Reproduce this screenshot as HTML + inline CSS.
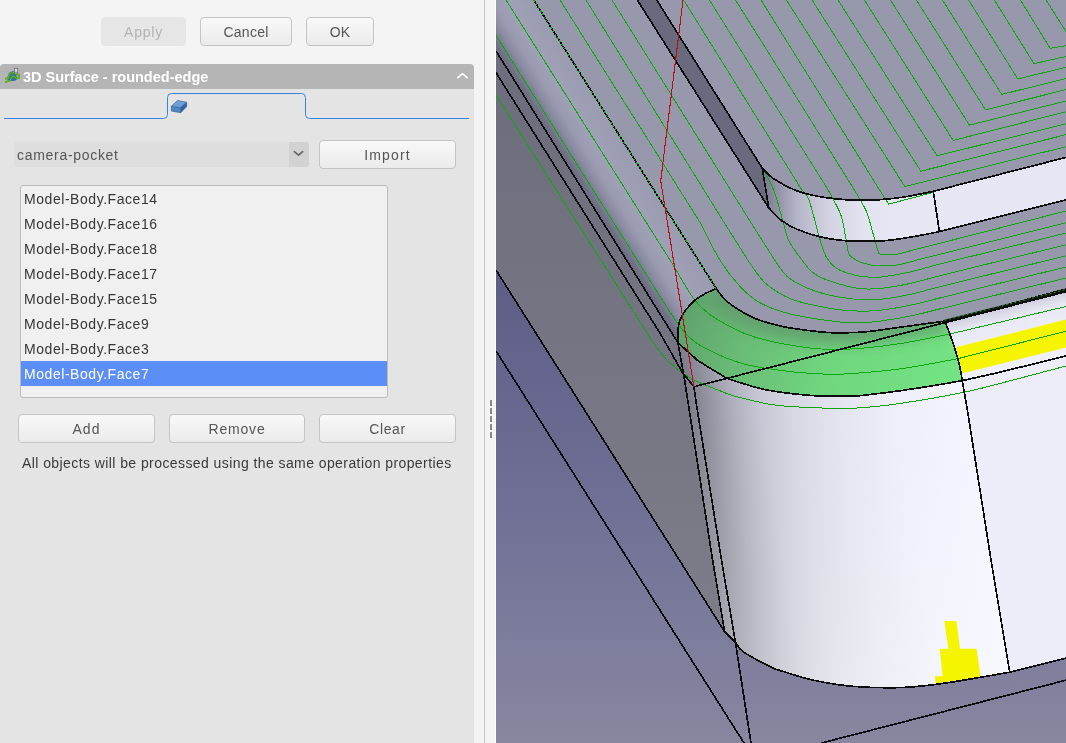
<!DOCTYPE html>
<html><head><meta charset="utf-8">
<style>
html,body{margin:0;padding:0;}
body{width:1066px;height:743px;overflow:hidden;background:#f4f4f4;font-family:"Liberation Sans",sans-serif;position:relative;color:#3d3d3d;font-size:14px;letter-spacing:0.45px;}
.abs{position:absolute;box-sizing:border-box;}
.btn,.item,#title,#combo,#note{will-change:transform;}
.btn{position:absolute;box-sizing:border-box;border:1px solid #c4c4c4;border-radius:4px;background:linear-gradient(#f8f8f8,#ebebeb);color:#555;letter-spacing:0.25px;text-align:center;height:29px;line-height:29px;white-space:nowrap;}
.item{letter-spacing:0.55px;position:absolute;left:1px;right:1px;height:25px;line-height:27px;color:#363636;padding-left:2px;box-sizing:border-box;white-space:nowrap;}
</style></head><body>
<!-- top buttons -->
<div class="btn" style="left:101px;top:17px;width:85px;background:#e6e6e6;border-color:#e6e6e6;color:#b4b4b4;letter-spacing:0.75px;">Apply</div>
<div class="btn" style="left:200px;top:17px;width:92px;">Cancel</div>
<div class="btn" style="left:306px;top:17px;width:68px;">OK</div>
<!-- panel body -->
<div class="abs" style="left:0;top:64px;width:474px;height:679px;background:#e4e4e4;border-radius:4px 4px 0 0;"></div>
<div class="abs" style="left:0;top:64px;width:474px;height:25px;background:#b5b5b5;border-radius:4px 4px 0 0;"></div>
<div class="abs" id="title" style="left:23px;top:64px;height:25px;line-height:27px;font-size:14.5px;letter-spacing:0;font-weight:bold;color:#fff;white-space:nowrap;">3D Surface - rounded-edge</div>
<!-- header icon -->
<svg class="abs" style="left:2px;top:64px;" width="24" height="24" viewBox="2 64 24 24">
<path d="M7.2 79.5 Q7.6 72.6 12.3 71.2 Q15.3 70.8 16.3 73.5 L17 79.5 L14.5 81 L9.5 81 Z" fill="#3a6dbe"/>
<rect x="14.4" y="68.3" width="3.3" height="6.3" fill="#dcdcdc" stroke="#666" stroke-width="0.7"/>
<path d="M14.6 72.3 H17.5 M14.6 73.6 H17.5" stroke="#555" stroke-width="0.6"/>
<path d="M5.9 78.6 L8.1 78.2 L9.4 74.7 L11.7 72.8 L14 72.7" fill="none" stroke="#3d8f12" stroke-width="1.8" stroke-linejoin="round" stroke-linecap="round"/>
<path d="M5.9 78.6 L8.1 78.2 L9.4 74.7 L11.7 72.8 L14 72.7" fill="none" stroke="#66d01e" stroke-width="0.9" stroke-linejoin="round" stroke-linecap="round"/>
<path d="M5.9 81.8 L10.1 80.5 L11.4 77.2 L13.3 76.3 L14.9 76.9 L16.5 78.5 L19.2 77.6 L18.8 74.9 L17.4 74.5" fill="none" stroke="#3d8f12" stroke-width="1.8" stroke-linejoin="round" stroke-linecap="round"/>
<path d="M5.9 81.8 L10.1 80.5 L11.4 77.2 L13.3 76.3 L14.9 76.9 L16.5 78.5 L19.2 77.6 L18.8 74.9 L17.4 74.5" fill="none" stroke="#66d01e" stroke-width="0.9" stroke-linejoin="round" stroke-linecap="round"/>
</svg>
<!-- collapse chevron -->
<svg class="abs" style="left:452px;top:66px;" width="20" height="20" viewBox="452 66 20 20"><path d="M457.9 77.6 L462.5 73.6 L467.1 77.6" fill="none" stroke="#fff" stroke-width="1.7" stroke-linecap="round" stroke-linejoin="round"/></svg>
<!-- tab line -->
<svg class="abs" style="left:0;top:89px;" width="474" height="34" viewBox="0 89 474 34">
<path d="M4 118.5 H163.5 Q167.5 118.5 167.5 114.5 V97.5 Q167.5 93.5 171.5 93.5 H301.5 Q305.5 93.5 305.5 97.5 V114.5 Q305.5 118.5 309.5 118.5 H469" fill="none" stroke="#3584e4" stroke-width="1"/>
<!-- tab icon -->
<path d="M171.3 106.3 L177.5 100.5 L186.7 102.2 L180.5 107.6 Z" fill="#6a9fd8"/>
<path d="M171.3 106.3 L180.5 107.6 L180.7 112.7 L171.5 111.1 Z" fill="#4f88c8"/>
<path d="M180.5 107.6 L186.7 102.2 L186.7 106.6 L180.7 112.7 Z" fill="#2f63a8"/>
<path d="M171.3 106.3 L177.5 100.5 L186.7 102.2 L186.7 106.6 L180.7 112.7 L171.5 111.1 Z M171.3 106.3 L180.5 107.6 L186.7 102.2 M180.5 107.6 L180.7 112.7" fill="none" stroke="#2d5488" stroke-width="0.6" stroke-linejoin="round"/>
</svg>
<!-- combo -->
<div class="abs" style="left:14px;top:142px;width:295px;height:25px;background:#dedede;border-radius:3px;"></div>
<div class="abs" style="left:289px;top:142px;width:20px;height:25px;background:#d2d2d2;border-radius:0 3px 3px 0;"></div>
<svg class="abs" style="left:289px;top:142px;" width="20" height="25" viewBox="289 142 20 25"><path d="M294.3 151.7 L298.5 155.2 L302.7 151.7" fill="none" stroke="#666" stroke-width="1.7" stroke-linecap="round" stroke-linejoin="round"/></svg>
<div class="abs" id="combo" style="left:17px;top:142px;height:25px;line-height:27px;color:#555;letter-spacing:0.7px;">camera-pocket</div>
<div class="btn" style="left:319px;top:140px;width:137px;letter-spacing:1.1px;">Import</div>
<!-- list -->
<div class="abs" style="left:20px;top:185px;width:368px;height:213px;background:#f0f0f0;border:1px solid #bbb;border-radius:3px;">
<div class="item" style="top:0px;">Model-Body.Face14</div>
<div class="item" style="top:25px;">Model-Body.Face16</div>
<div class="item" style="top:50px;">Model-Body.Face18</div>
<div class="item" style="top:75px;">Model-Body.Face17</div>
<div class="item" style="top:100px;">Model-Body.Face15</div>
<div class="item" style="top:125px;">Model-Body.Face9</div>
<div class="item" style="top:150px;">Model-Body.Face3</div>
<div class="item" style="top:175px;left:0;right:0;padding-left:3px;background:#5b8ef7;color:#fff;">Model-Body.Face7</div>
</div>
<div class="btn" style="left:18px;top:414px;width:137px;letter-spacing:1px;">Add</div>
<div class="btn" style="left:169px;top:414px;width:136px;letter-spacing:0.8px;">Remove</div>
<div class="btn" style="left:319px;top:414px;width:137px;letter-spacing:0.6px;">Clear</div>
<div class="abs" id="note" style="letter-spacing:0.42px;left:21.5px;top:451px;height:25px;line-height:25px;color:#3a3a3a;white-space:nowrap;">All objects will be processed using the same operation properties</div>
<!-- splitter -->
<div class="abs" style="left:495px;top:0;width:1px;height:743px;background:#fcfcfc;"></div>
<div class="abs" style="left:484px;top:0;width:1px;height:743px;background:#c6c6c6;"></div>
<div class="abs" style="left:490px;top:400px;width:2px;height:38px;background:repeating-linear-gradient(#888 0,#888 6px,transparent 6px,transparent 8px);"></div>
<!-- viewport -->
<svg class="abs" id="vp" style="left:496px;top:0;" width="570" height="743" viewBox="496 0 570 743">
<defs>
<linearGradient id="bg" x1="0" y1="0" x2="0" y2="743" gradientUnits="userSpaceOnUse">
<stop offset="0" stop-color="#47477a"/><stop offset="0.36" stop-color="#5c5c86"/><stop offset="0.73" stop-color="#737398"/><stop offset="1" stop-color="#8787a1"/>
</linearGradient>
<linearGradient id="fil" x1="496" y1="51" x2="555.4" y2="14" gradientUnits="userSpaceOnUse">
<stop offset="0" stop-color="#6c6c80"/><stop offset="0.06" stop-color="#707086"/><stop offset="0.2" stop-color="#8a8aa0"/><stop offset="0.33" stop-color="#9a9ab0"/><stop offset="0.5" stop-color="#a0a0b6"/><stop offset="0.75" stop-color="#9c9cb2"/><stop offset="1" stop-color="#9898ae"/>
</linearGradient>
<linearGradient id="wall" x1="690" y1="400" x2="966.4" y2="355" gradientUnits="userSpaceOnUse">
<stop offset="0" stop-color="#7e7e8c"/><stop offset="0.05" stop-color="#8e8e9c"/><stop offset="0.14" stop-color="#acacba"/><stop offset="0.24" stop-color="#c6c6d4"/><stop offset="0.35" stop-color="#d6d6e2"/><stop offset="0.52" stop-color="#e4e4f0"/><stop offset="0.71" stop-color="#eeeefa"/><stop offset="0.9" stop-color="#f2f2fd"/><stop offset="1" stop-color="#f4f4ff"/>
</linearGradient>
<linearGradient id="boss" x1="762" y1="0" x2="900" y2="0" gradientUnits="userSpaceOnUse">
<stop offset="0" stop-color="#747488"/><stop offset="0.08" stop-color="#8a8a9e"/><stop offset="0.25" stop-color="#b4b4c8"/><stop offset="0.48" stop-color="#d2d2e2"/><stop offset="0.72" stop-color="#e2e2f0"/><stop offset="1" stop-color="#e6e6f4"/>
</linearGradient>
<linearGradient id="grn" x1="680" y1="300" x2="960" y2="390" gradientUnits="userSpaceOnUse">
<stop offset="0" stop-color="#5f9f6c"/><stop offset="0.25" stop-color="#69bc76"/><stop offset="0.55" stop-color="#70d67e"/><stop offset="1" stop-color="#73e483"/>
</linearGradient>
<linearGradient id="rfil" x1="1000" y1="306" x2="1010" y2="345" gradientUnits="userSpaceOnUse">
<stop offset="0" stop-color="#c8c8d8"/><stop offset="0.35" stop-color="#e8e8f4"/><stop offset="1" stop-color="#f0f0fb"/>
</linearGradient>
<linearGradient id="wov" x1="0" y1="400" x2="0" y2="690" gradientUnits="userSpaceOnUse">
<stop offset="0" stop-color="#fff" stop-opacity="0"/><stop offset="1" stop-color="#fff" stop-opacity="0.4"/>
</linearGradient>
<linearGradient id="dw" x1="0" y1="80" x2="0" y2="630" gradientUnits="userSpaceOnUse">
<stop offset="0" stop-color="#6d6d7d"/><stop offset="1" stop-color="#7d7d89"/>
</linearGradient>
<filter id="bl" x="-20%" y="-50%" width="140%" height="200%"><feGaussianBlur stdDeviation="7"/></filter>
</defs>
<rect x="496" y="0" width="570" height="743" fill="url(#bg)"/>
<path d="M496.0 51.0 L677.9 342.6 L683.6 373.7 L712.6 560.0 L724.7 631.8 L496.0 270.0 Z" fill="url(#dw)"/>
<path d="M496 0 H1066 V289 L990.0 309.4 L944.7 321.1  C936.8 322.2 910.3 325.9 897.5 327.6 C884.7 329.4 876.5 330.7 867.7 331.6 C859.0 332.5 851.7 332.7 845.0 332.8 C838.3 332.9 833.3 332.9 827.5 332.5 C821.7 332.1 817.5 331.7 810.0 330.7 C802.5 329.7 791.8 328.6 782.5 326.5 C773.2 324.4 762.5 321.6 754.2 318.1 C745.9 314.7 737.9 309.4 732.6 305.8 C727.3 302.2 724.9 299.3 722.2 296.4 C719.5 293.5 717.2 289.8 716.2 288.5  L533.7 0 Z" fill="#9898ad"/>
<path d="M496 0 L533.7 0.0 L716.2 288.5  C714.4 289.4 708.8 291.7 705.2 293.6 C701.7 295.6 698.2 297.4 694.9 300.2 C691.6 303.0 687.9 307.1 685.4 310.5 C682.9 313.9 681.0 317.6 679.8 320.9 C678.5 324.2 678.2 326.7 677.9 330.3 C677.6 333.9 677.9 340.6 677.9 342.6  L496 51 Z" fill="url(#fil)"/>
<path d="M677.9 342.6 L683.6 373.7 L712.6 560.0 L724.7 631.8  C726.5 633.6 732.4 639.2 735.5 642.6 C738.6 646.0 737.8 648.0 743.6 652.0 C749.4 656.0 764.3 663.7 770.5 666.8 C776.7 669.9 773.9 668.6 781.0 670.8 C788.1 673.0 801.2 677.6 813.3 680.2 C825.4 682.8 838.9 685.2 853.7 686.4 C868.5 687.6 887.2 688.0 902.0 687.5 C916.8 687.0 924.5 686.0 942.5 683.5 C960.5 681.0 998.5 674.1 1009.7 672.2  L991.0 560.0 L967.4 410.0 L962.2 380.6  C961.8 378.1 960.8 370.8 959.6 365.7 C958.4 360.6 956.8 355.2 955.2 350.0 C953.6 344.8 951.6 339.0 949.9 334.2 C948.1 329.4 945.6 323.3 944.7 321.1  C936.8 322.2 910.3 325.9 897.5 327.6 C884.7 329.4 876.5 330.7 867.7 331.6 C859.0 332.5 851.7 332.7 845.0 332.8 C838.3 332.9 833.3 332.9 827.5 332.5 C821.7 332.1 817.5 331.7 810.0 330.7 C802.5 329.7 791.8 328.6 782.5 326.5 C773.2 324.4 762.5 321.6 754.2 318.1 C745.9 314.7 737.9 309.4 732.6 305.8 C727.3 302.2 724.9 299.3 722.2 296.4 C719.5 293.5 717.2 289.8 716.2 288.5  C714.4 289.4 708.8 291.7 705.2 293.6 C701.7 295.6 698.2 297.4 694.9 300.2 C691.6 303.0 687.9 307.1 685.4 310.5 C682.9 313.9 681.0 317.6 679.8 320.9 C678.5 324.2 678.2 326.7 677.9 330.3 C677.6 333.9 677.9 340.6 677.9 342.6  Z" fill="url(#wall)"/>
<path d="M677.9 342.6 L683.6 373.7 L712.6 560.0 L724.7 631.8  C726.5 633.6 732.4 639.2 735.5 642.6 C738.6 646.0 737.8 648.0 743.6 652.0 C749.4 656.0 764.3 663.7 770.5 666.8 C776.7 669.9 773.9 668.6 781.0 670.8 C788.1 673.0 801.2 677.6 813.3 680.2 C825.4 682.8 838.9 685.2 853.7 686.4 C868.5 687.6 887.2 688.0 902.0 687.5 C916.8 687.0 924.5 686.0 942.5 683.5 C960.5 681.0 998.5 674.1 1009.7 672.2  L991.0 560.0 L967.4 410.0 L962.2 380.6  C961.8 378.1 960.8 370.8 959.6 365.7 C958.4 360.6 956.8 355.2 955.2 350.0 C953.6 344.8 951.6 339.0 949.9 334.2 C948.1 329.4 945.6 323.3 944.7 321.1  C936.8 322.2 910.3 325.9 897.5 327.6 C884.7 329.4 876.5 330.7 867.7 331.6 C859.0 332.5 851.7 332.7 845.0 332.8 C838.3 332.9 833.3 332.9 827.5 332.5 C821.7 332.1 817.5 331.7 810.0 330.7 C802.5 329.7 791.8 328.6 782.5 326.5 C773.2 324.4 762.5 321.6 754.2 318.1 C745.9 314.7 737.9 309.4 732.6 305.8 C727.3 302.2 724.9 299.3 722.2 296.4 C719.5 293.5 717.2 289.8 716.2 288.5  C714.4 289.4 708.8 291.7 705.2 293.6 C701.7 295.6 698.2 297.4 694.9 300.2 C691.6 303.0 687.9 307.1 685.4 310.5 C682.9 313.9 681.0 317.6 679.8 320.9 C678.5 324.2 678.2 326.7 677.9 330.3 C677.6 333.9 677.9 340.6 677.9 342.6  Z" fill="url(#wov)"/>
<path d="M962.2 380.6 L967.4 410.0 L991.0 560.0 L1009.7 672.2  L1009.7 672.2 L1066.0 658.2  V356 L1050 360 Z" fill="#ededf9"/>
<path d="M944.7 321.1 L990.0 309.4 L1066.0 289.0  V356 L1050.0 360.0 L990.0 374.5 L962.2 380.6  C961.8 378.1 960.8 370.8 959.6 365.7 C958.4 360.6 956.8 355.2 955.2 350.0 C953.6 344.8 951.6 339.0 949.9 334.2 C948.1 329.4 945.6 323.3 944.7 321.1  Z" fill="url(#rfil)"/>
<path d="M956 347.3 L1066 319.5 V347.5 L961.8 373.6 Z" fill="#f5f500"/>
<clipPath id="gc"><path d="M716.2 288.5 C714.4 289.4 708.8 291.7 705.2 293.6 C701.7 295.6 698.2 297.4 694.9 300.2 C691.6 303.0 687.9 307.1 685.4 310.5 C682.9 313.9 681.0 317.6 679.8 320.9 C678.5 324.2 678.2 326.7 677.9 330.3 C677.6 333.9 677.9 340.6 677.9 342.6 L697.7 360.5 L726.9 378.4 C733.3 380.3 751.6 386.9 765.5 389.7 C779.4 392.5 796.2 394.3 810.0 395.4 C823.8 396.5 839.8 396.3 848.5 396.3 C857.2 396.3 854.3 396.3 862.5 395.4 C870.7 394.5 885.9 392.7 897.5 391.1 C909.1 389.5 921.6 387.6 932.4 385.8 C943.2 384.1 957.2 381.5 962.2 380.6 C961.8 378.1 960.8 370.8 959.6 365.7 C958.4 360.6 956.8 355.2 955.2 350.0 C953.6 344.8 951.6 339.0 949.9 334.2 C948.1 329.4 945.6 323.3 944.7 321.1 C936.8 322.2 910.3 325.9 897.5 327.6 C884.7 329.4 876.5 330.7 867.7 331.6 C859.0 332.5 851.7 332.7 845.0 332.8 C838.3 332.9 833.3 332.9 827.5 332.5 C821.7 332.1 817.5 331.7 810.0 330.7 C802.5 329.7 791.8 328.6 782.5 326.5 C773.2 324.4 762.5 321.6 754.2 318.1 C745.9 314.7 737.9 309.4 732.6 305.8 C727.3 302.2 724.9 299.3 722.2 296.4 C719.5 293.5 717.2 289.8 716.2 288.5 Z"/></clipPath>
<path d="M716.2 288.5 C714.4 289.4 708.8 291.7 705.2 293.6 C701.7 295.6 698.2 297.4 694.9 300.2 C691.6 303.0 687.9 307.1 685.4 310.5 C682.9 313.9 681.0 317.6 679.8 320.9 C678.5 324.2 678.2 326.7 677.9 330.3 C677.6 333.9 677.9 340.6 677.9 342.6 L697.7 360.5 L726.9 378.4 C733.3 380.3 751.6 386.9 765.5 389.7 C779.4 392.5 796.2 394.3 810.0 395.4 C823.8 396.5 839.8 396.3 848.5 396.3 C857.2 396.3 854.3 396.3 862.5 395.4 C870.7 394.5 885.9 392.7 897.5 391.1 C909.1 389.5 921.6 387.6 932.4 385.8 C943.2 384.1 957.2 381.5 962.2 380.6 C961.8 378.1 960.8 370.8 959.6 365.7 C958.4 360.6 956.8 355.2 955.2 350.0 C953.6 344.8 951.6 339.0 949.9 334.2 C948.1 329.4 945.6 323.3 944.7 321.1 C936.8 322.2 910.3 325.9 897.5 327.6 C884.7 329.4 876.5 330.7 867.7 331.6 C859.0 332.5 851.7 332.7 845.0 332.8 C838.3 332.9 833.3 332.9 827.5 332.5 C821.7 332.1 817.5 331.7 810.0 330.7 C802.5 329.7 791.8 328.6 782.5 326.5 C773.2 324.4 762.5 321.6 754.2 318.1 C745.9 314.7 737.9 309.4 732.6 305.8 C727.3 302.2 724.9 299.3 722.2 296.4 C719.5 293.5 717.2 289.8 716.2 288.5 Z" fill="url(#grn)"/>
<g clip-path="url(#gc)"><path d="M716.2 288.5 C717.2 289.8 719.5 293.5 722.2 296.4 C724.9 299.3 727.3 302.2 732.6 305.8 C737.9 309.4 745.9 314.7 754.2 318.1 C762.5 321.6 773.2 324.4 782.5 326.5 C791.8 328.6 802.5 329.7 810.0 330.7 C817.5 331.7 821.7 332.1 827.5 332.5 C833.3 332.9 838.3 332.9 845.0 332.8 C851.7 332.7 859.0 332.5 867.7 331.6 C876.5 330.7 884.7 329.4 897.5 327.6 C910.3 325.9 936.8 322.2 944.7 321.1 " fill="none" stroke="#629a6e" stroke-width="24" opacity="0.8" filter="url(#bl)"/></g>
<path d="M637.3 0.0 L768.7 207.8  L762.3 168.3 L656.7 0.0  Z" fill="#6a6a7e"/>
<path d="M762.3 168.3 C764.2 170.0 768.2 175.1 773.6 178.7 C779.0 182.3 787.1 187.0 794.6 190.0 C802.1 193.0 810.7 194.9 818.8 196.5 C826.9 198.1 836.1 198.9 843.0 199.5 C849.9 200.1 854.1 200.1 860.0 200.2 C865.9 200.2 870.9 200.3 878.2 199.8 C885.5 199.3 894.4 198.5 903.6 197.1 C912.8 195.7 928.3 192.3 933.3 191.3  L1066.0 157.4  V199.8 L939.6 231.6  C935.0 232.5 921.2 235.4 912.0 236.9 C902.8 238.4 892.8 240.0 884.5 240.7 C876.2 241.4 868.9 241.2 862.0 241.2 C855.1 241.2 849.9 241.2 843.0 240.5 C836.1 239.8 827.9 238.7 820.4 236.9 C812.9 235.1 804.2 232.3 797.8 229.6 C791.3 226.9 786.6 224.3 781.7 220.7 C776.9 217.1 770.9 210.0 768.7 207.8  Z" fill="url(#boss)"/>
<path d="M944.3 621 H956.5 L960 648.8 H976.6 L980.7 676.7 L935.7 683.6 L935 676.2 H942.5 L939.8 648.8 H948.4 Z" fill="#f5f500"/>
<g fill="none" stroke="#0ca80c" stroke-width="1" shape-rendering="crispEdges">
<path d="M786.4 0.0 L904.8 186.5 L1066.0 146.7 "/>
<path d="M812.0 0.0 L920.9 171.2 L1066.0 134.6 "/>
<path d="M838.0 0.0 L937.1 155.8 L1066.0 123.8 "/>
<path d="M864.4 0.0 L953.2 140.4 L1066.0 111.7 "/>
<path d="M890.5 0.0 L969.4 125.1 L1066.0 100.9 "/>
<path d="M916.4 0.0 L985.5 109.8 L1066.0 89.6 "/>
<path d="M942.5 0.0 L1001.7 94.4 L1066.0 78.6 "/>
<path d="M968.6 0.0 L1017.8 79.0 L1066.0 67.3 "/>
<path d="M994.4 0.0 L1034.0 63.7 L1066.0 56.5 "/>
<path d="M1020.5 0.0 L1050.1 48.3 L1066.0 45.7 "/>
<path d="M1046.0 0.0 L1066.0 31.6 "/>
<path d="M761.0 0.0 L879.6 190.0 L888.7 204.1 L933.0 192.5 "/>
<path d="M735.5 0 L854.4 190 C855.6 192.0 859.3 198.0 861.5 202.0 C863.7 206.0 865.3 208.0 867.5 214.2 C869.7 220.4 872.8 232.9 874.6 239.4 C876.5 245.9 877.9 250.9 878.6 253.2 L880.5 254.6 L886.0 255.0 L897.4 254.1 L1066.0 211.0 "/>
<path d="M709.4 0 L828.2 190 C829.2 191.8 832.0 196.7 834.2 201.1 C836.4 205.5 839.3 209.6 841.3 216.2 C843.3 222.8 845.0 234.1 846.3 240.5 C847.6 246.9 847.1 251.1 849.3 254.6 C851.5 258.1 855.7 259.9 859.4 261.6 C863.1 263.4 868.1 264.4 871.5 265.1 C874.9 265.8 875.7 265.8 880.0 265.8 C884.3 265.8 887.4 266.8 897.4 264.9 C907.4 263.0 911.9 261.2 940.0 254.2 C968.1 247.2 1045.0 227.9 1066.0 222.7 "/>
<path d="M683.6 0 L801.9 190 C803.1 191.7 806.1 192.4 809.0 200.1 C811.9 207.8 816.2 227.0 819.1 236.4 C822.0 245.8 823.1 251.2 826.1 256.6 C829.1 262.0 832.7 265.7 837.2 268.7 C841.8 271.7 848.6 273.4 853.4 274.8 C858.2 276.2 861.6 276.4 866.0 276.8 C870.4 277.2 872.7 277.9 880.0 277.1 C887.3 276.3 900.0 274.3 910.0 272.1 C920.0 269.9 924.5 267.9 940.0 264.0 C955.5 260.1 982.0 253.7 1003.0 248.5 C1024.0 243.4 1055.5 235.7 1066.0 233.1 "/>
<path d="M762.3 168.3 C764.2 171.9 770.3 181.3 773.7 190.0 C777.1 198.7 780.2 211.9 782.7 220.3 C785.2 228.7 785.8 234.1 788.8 240.5 C791.8 246.9 796.9 253.2 800.9 258.6 C804.9 264.0 808.3 269.0 813.0 272.7 C817.7 276.4 821.8 278.2 829.2 280.8 C836.6 283.4 848.9 287.0 857.4 288.3 C865.9 289.6 871.2 289.3 880.0 288.5 C888.8 287.7 900.0 285.6 910.0 283.5 C920.0 281.4 924.5 279.6 940.0 275.7 C955.5 271.8 982.0 265.4 1003.0 260.2 C1024.0 255.1 1055.5 247.4 1066.0 244.8 "/>
<path d="M612 0 L754.5 228.3 C758.9 235.0 774.0 259.8 780.7 268.7 C787.4 277.6 788.2 277.8 794.9 281.8 C801.6 285.8 811.4 290.0 821.1 292.9 C830.9 295.8 843.6 297.9 853.4 299.0 C863.2 300.1 870.6 300.2 880.0 299.4 C889.4 298.6 900.0 296.5 910.0 294.4 C920.0 292.3 924.5 290.6 940.0 286.7 C955.5 282.8 982.0 276.4 1003.0 271.2 C1024.0 266.1 1055.5 258.4 1066.0 255.8 "/>
<path d="M586 0 L730.3 232.4 C734.7 239.1 749.4 263.3 756.5 272.7 C763.6 282.1 766.0 284.2 772.7 288.9 C779.4 293.6 786.1 297.6 796.9 301.0 C807.6 304.4 826.4 307.8 837.2 309.5 C848.0 311.2 854.4 311.0 861.5 311.1 C868.6 311.2 871.9 311.3 880.0 310.3 C888.1 309.3 900.0 307.4 910.0 305.3 C920.0 303.2 924.5 301.7 940.0 297.9 C955.5 294.1 982.0 287.6 1003.0 282.4 C1024.0 277.3 1055.5 269.6 1066.0 267.0 "/>
<path d="M560 0 L700 222.3 C703.4 228.7 713.5 249.8 720.2 260.6 C726.9 271.4 733.7 279.8 740.4 286.9 C747.1 294.0 752.1 298.5 760.5 303.0 C768.9 307.5 777.3 310.9 790.8 314.1 C804.3 317.3 829.4 320.8 841.3 322.2 C853.2 323.6 855.5 322.8 862.0 322.6 C868.5 322.4 872.0 322.2 880.0 321.1 C888.0 320.0 900.0 318.1 910.0 316.1 C920.0 314.1 924.5 312.7 940.0 308.9 C955.5 305.1 982.0 298.6 1003.0 293.4 C1024.0 288.3 1055.5 280.6 1066.0 278.0 "/>
<path d="M506 0 L675 268 C678.3 273.4 688.0 291.7 694.9 300.2 C701.8 308.7 706.6 312.9 716.5 319.0 C726.4 325.1 738.6 332.1 754.2 336.9 C769.8 341.7 794.0 346.0 810.0 348.0 C826.0 350.0 835.4 349.7 850.0 349.0 C864.6 348.3 880.8 346.5 897.5 344.0 C914.2 341.5 941.2 335.7 950.0 334.0 L1066 306.5"/>
<path d="M496 35.5 L660 296.4 C664.1 302.4 676.6 323.4 684.5 332.2 C692.4 341.0 697.1 343.9 707.1 349.2 C717.1 354.5 730.7 360.4 744.8 364.2 C758.9 368.0 779.4 370.2 791.9 371.8 C804.4 373.4 812.6 373.2 820.0 373.7 C827.4 374.1 823.3 375.2 836.2 374.5 C849.1 373.8 877.2 371.8 897.5 369.2 C917.8 366.6 947.8 360.4 957.8 358.7 L1066 331.2"/>
<path d="M496 95 L640 321.7 C641.7 324.4 647.0 333.0 650.0 337.6 C653.0 342.2 655.3 345.9 658.0 349.5 C660.7 353.1 663.2 356.1 666.0 359.0 C668.8 361.9 672.0 364.5 675.0 367.0 C678.0 369.5 681.0 371.8 684.3 374.0 C687.6 376.2 691.0 378.4 694.7 380.3 C698.4 382.2 702.3 383.8 706.5 385.5 C710.7 387.2 715.2 389.0 720.0 390.8 C724.8 392.6 726.6 394.0 735.4 396.3 C744.2 398.6 760.6 402.9 773.0 404.8 C785.4 406.7 796.5 406.9 810.0 407.5 C823.5 408.1 838.7 408.9 853.7 408.2 C868.7 407.5 881.6 406.1 900.0 403.5 C918.4 400.9 944.8 396.3 964.0 392.3 C983.2 388.3 998.0 383.9 1015.0 379.5 C1032.0 375.1 1057.5 368.2 1066.0 366.0 "/>
</g>
<g fill="none" stroke="#0c0c0c" stroke-width="1.7" stroke-linejoin="round" shape-rendering="crispEdges">
<path d="M496.0 51.0 L677.9 342.6 "/>
<path d="M496.0 270.0 L724.7 631.8 C726.5 633.6 732.4 639.2 735.5 642.6 C738.6 646.0 737.8 648.0 743.6 652.0 C749.4 656.0 764.3 663.7 770.5 666.8 C776.7 669.9 773.9 668.6 781.0 670.8 C788.1 673.0 801.2 677.6 813.3 680.2 C825.4 682.8 838.9 685.2 853.7 686.4 C868.5 687.6 887.2 688.0 902.0 687.5 C916.8 687.0 924.5 686.0 942.5 683.5 C960.5 681.0 998.5 674.1 1009.7 672.2 L1066.0 658.2 "/>
<path d="M677.9 330.3 L677.9 342.6 L683.6 373.7 L712.6 560.0 L724.7 631.8 "/>
<path d="M944.7 321.1 C945.6 323.3 948.1 329.4 949.9 334.2 C951.6 339.0 953.6 344.8 955.2 350.0 C956.8 355.2 958.4 360.6 959.6 365.7 C960.8 370.8 961.8 378.1 962.2 380.6 L967.4 410.0 L991.0 560.0 L1009.7 672.2 "/>
<path d="M716.2 288.5 C714.4 289.4 708.8 291.7 705.2 293.6 C701.7 295.6 698.2 297.4 694.9 300.2 C691.6 303.0 687.9 307.1 685.4 310.5 C682.9 313.9 681.0 317.6 679.8 320.9 C678.5 324.2 678.2 326.7 677.9 330.3 C677.6 333.9 677.9 340.6 677.9 342.6 "/>
<path d="M677.9 342.6 L697.7 360.5 L726.9 378.4 C733.3 380.3 751.6 386.9 765.5 389.7 C779.4 392.5 796.2 394.3 810.0 395.4 C823.8 396.5 839.8 396.3 848.5 396.3 C857.2 396.3 854.3 396.3 862.5 395.4 C870.7 394.5 885.9 392.7 897.5 391.1 C909.1 389.5 921.6 387.6 932.4 385.8 C943.2 384.1 957.2 381.5 962.2 380.6 L990.0 374.5 L1050.0 360.0 L1066.0 356.0 "/>
<path d="M716.2 288.5 C717.2 289.8 719.5 293.5 722.2 296.4 C724.9 299.3 727.3 302.2 732.6 305.8 C737.9 309.4 745.9 314.7 754.2 318.1 C762.5 321.6 773.2 324.4 782.5 326.5 C791.8 328.6 802.5 329.7 810.0 330.7 C817.5 331.7 821.7 332.1 827.5 332.5 C833.3 332.9 838.3 332.9 845.0 332.8 C851.7 332.7 859.0 332.5 867.7 331.6 C876.5 330.7 884.7 329.4 897.5 327.6 C910.3 325.9 936.8 322.2 944.7 321.1 L990.0 309.4 L1066.0 289.0 "/>
<path d="M533.7 0.0 L716.2 288.5 "/>
<path d="M637.3 0.0 L768.7 207.8 "/>
<path d="M656.7 0.0 L762.3 168.3 L768.7 207.8 "/>
<path d="M762.3 168.3 C764.2 170.0 768.2 175.1 773.6 178.7 C779.0 182.3 787.1 187.0 794.6 190.0 C802.1 193.0 810.7 194.9 818.8 196.5 C826.9 198.1 836.1 198.9 843.0 199.5 C849.9 200.1 854.1 200.1 860.0 200.2 C865.9 200.2 870.9 200.3 878.2 199.8 C885.5 199.3 894.4 198.5 903.6 197.1 C912.8 195.7 928.3 192.3 933.3 191.3 L1066.0 157.4 "/>
<path d="M768.7 207.8 C770.9 210.0 776.9 217.1 781.7 220.7 C786.6 224.3 791.3 226.9 797.8 229.6 C804.2 232.3 812.9 235.1 820.4 236.9 C827.9 238.7 836.1 239.8 843.0 240.5 C849.9 241.2 855.1 241.2 862.0 241.2 C868.9 241.2 876.2 241.4 884.5 240.7 C892.8 240.0 902.8 238.4 912.0 236.9 C921.2 235.4 935.0 232.5 939.6 231.6 L1066.0 199.8 "/>
<path d="M933.3 191.3 L939.4 231.6 "/>
</g>
<g fill="none" stroke="#0c0c0c" stroke-width="1.7" shape-rendering="crispEdges">
<path d="M496.0 72.7 L660.0 333.1 L682.6 372.7 L693.9 386.8 "/>
<path d="M693.9 386.8 L1066.0 291.7 "/>
<path d="M693.9 386.8 L697.3 410.0 L721.5 560.0 L735.5 642.6 L751.0 743.0 "/>
<path d="M496.0 350.9 L744.0 743.0 "/>
<path d="M821.4 743.0 L1066.0 680.2 "/>
</g>
<path d="M533.7 0.0 L716.2 288.5 " fill="none" stroke="#0ca80c" stroke-width="1.2" stroke-dasharray="2 2" shape-rendering="crispEdges"/>
<path d="M944.7 321.3 L1066 290.6" fill="none" stroke="#0c0c0c" stroke-width="3"/>
<path d="M944.7 320.3 L1066 289.6" fill="none" stroke="#0ca50c" stroke-width="1" stroke-dasharray="2 2.5"/>
<path d="M683 0 L660.7 180.8 L693.9 386.8" fill="none" stroke="#b40f14" stroke-width="1.1" shape-rendering="crispEdges"/>
</svg>
</body></html>
